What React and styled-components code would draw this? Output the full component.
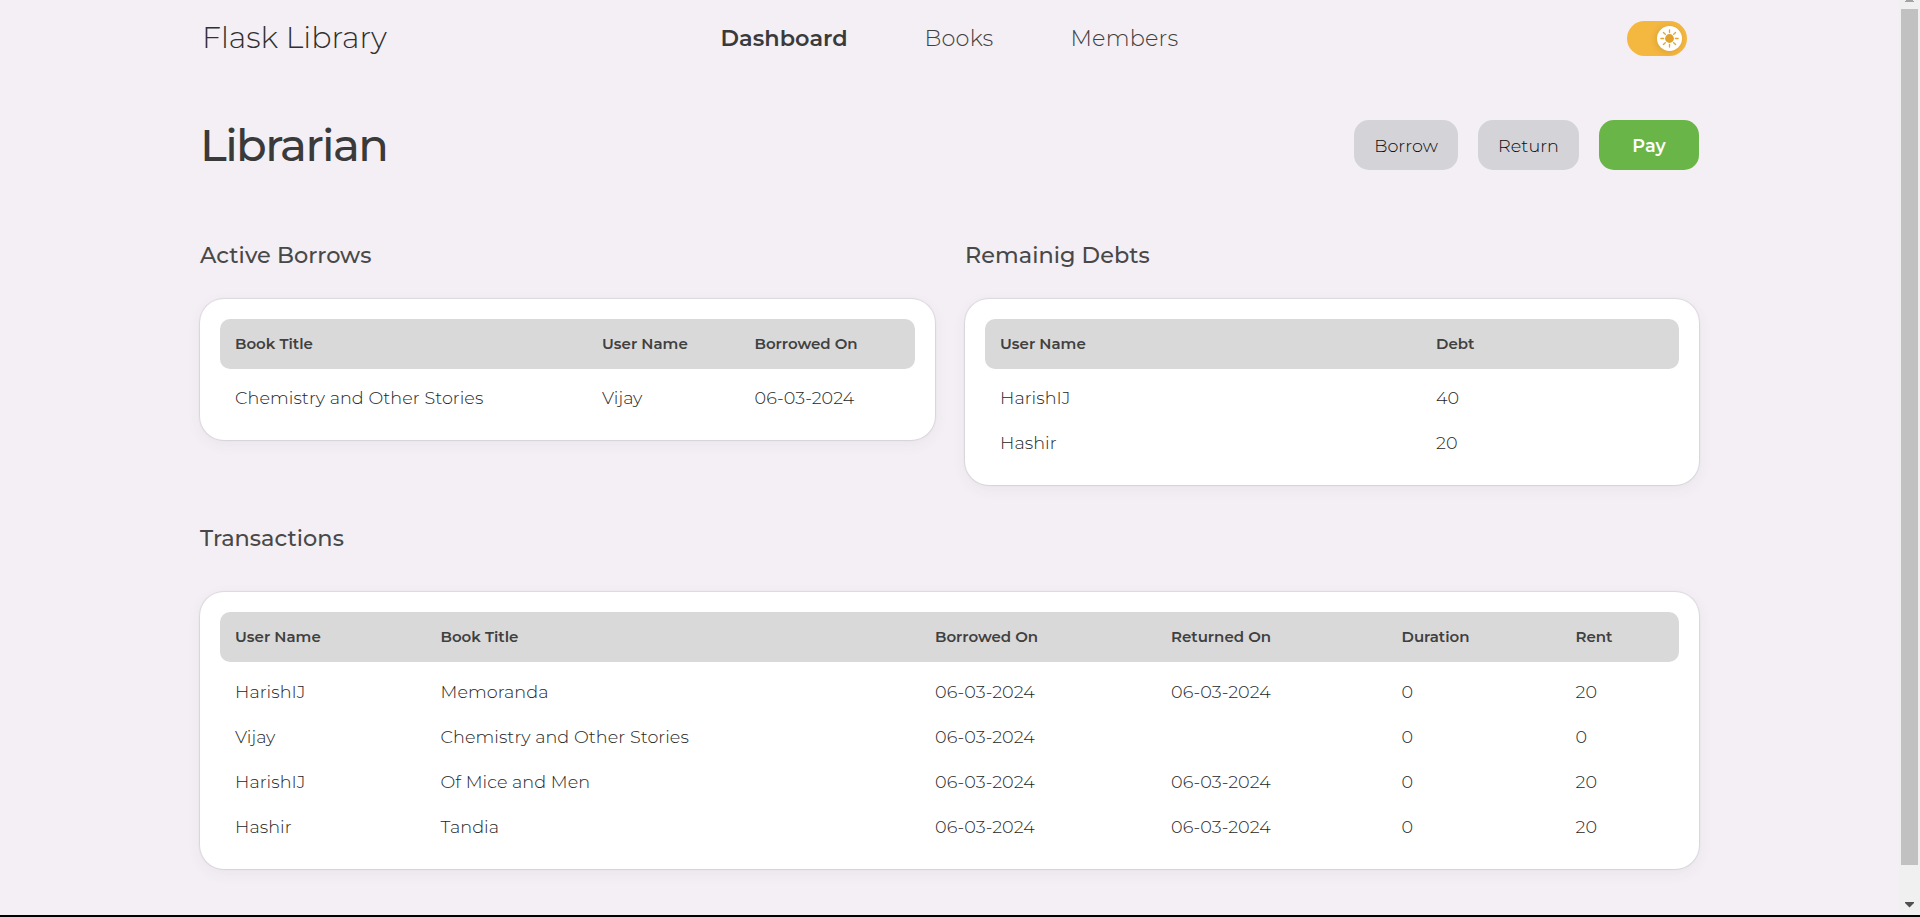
import React from "react";
import styled, { createGlobalStyle } from "styled-components";

const GlobalStyle = createGlobalStyle`
  * { box-sizing: border-box; }
  body {
    margin: 0;
    overflow: hidden;
    background: #f4eff5;
    color: #3a3a3a;
    font-family: Montserrat, Inter, "Open Sans", sans-serif;
  }
`;

const Screen = styled.div`
  display: flex;
  height: 917px;
  border-bottom: 2px solid #000;
`;

const Page = styled.div`
  flex: 1;
  display: flex;
  justify-content: center;
`;

const Content = styled.div`
  width: 1499px;
`;

const NavBar = styled.header`
  display: grid;
  grid-template-columns: 1fr auto 1fr;
  align-items: center;
  height: 77px;
  padding: 0 12px 0 2px;
`;

const Brand = styled.div`
  font-size: 30px;
  font-weight: 300;
  line-height: 40px;
  padding-bottom: 2px;
  color: #303030;
`;

const NavLinks = styled.nav`
  display: grid;
  grid-template-columns: 204px 146px 109px;
  padding: 0 0 2px 11px;
`;

const NavLink = styled.a`
  font-size: 22.4px;
  font-weight: ${(p) => (p.$active ? 600 : 300)};
  color: ${(p) => (p.$active ? "#3a3a3a" : "#404040")};
  letter-spacing: ${(p) => (p.$active ? 0.05 : 0.18)}px;
  line-height: 30px;
  white-space: nowrap;
`;

const Toggle = styled.button`
  justify-self: end;
  display: flex;
  align-items: center;
  justify-content: flex-end;
  width: 60px;
  height: 35px;
  padding: 0 5px;
  border: 0;
  border-radius: 18px;
  background: #f4b740;
`;

const Knob = styled.span`
  display: grid;
  place-items: center;
  width: 25px;
  height: 25px;
  border-radius: 50%;
  background: #fff;
  box-shadow: -1px 1px 6px rgba(120, 80, 0, 0.22);
`;

const TitleRow = styled.div`
  display: flex;
  align-items: center;
  justify-content: space-between;
  height: 50px;
  margin-top: 43px;
`;

const PageTitle = styled.h1`
  margin: 0;
  font-size: 45px;
  font-weight: 500;
  line-height: 52px;
  letter-spacing: -1.6px;
`;

const Actions = styled.div`
  display: flex;
  gap: 20px;
`;

const ActionButton = styled.button`
  width: ${(p) => p.$width}px;
  height: 50px;
  padding: 0;
  border: 0;
  border-radius: 15px;
  background: ${(p) => (p.$primary ? "#69b548" : "#d4d3d8")};
  color: ${(p) => (p.$primary ? "#fff" : "#0a0a0a")};
  font-family: inherit;
  font-size: 17.6px;
  font-weight: ${(p) => (p.$primary ? 600 : 300)};
  letter-spacing: 0.05px;
  line-height: 52px;
`;

const Columns = styled.div`
  display: grid;
  grid-template-columns: 735px 734px;
  gap: 30px;
  align-items: start;
  margin-top: 70px;
`;

const Section = styled.section`
  margin-top: ${(p) => p.$top || 0}px;
`;

const SectionTitle = styled.h2`
  margin: 0 0 ${(p) => p.$gap}px;
  font-size: 22.4px;
  font-weight: 500;
  letter-spacing: 0.04px;
  line-height: 30px;
  color: #484848;
`;

const Card = styled.div`
  padding: 20px;
  border-radius: 24px;
  background: #fff;
  box-shadow: 0 0 1px 1px rgba(40, 40, 50, 0.1), 0 4px 15px rgba(60, 40, 70, 0.06);
`;

const HeadRow = styled.div`
  display: grid;
  grid-template-columns: ${(p) => p.$cols};
  height: 50px;
  margin-bottom: ${(p) => p.$gap}px;
  padding-left: 15px;
  border-radius: 10px;
  background: #d9d9d9;
`;

const HeadCell = styled.div`
  font-size: 15px;
  font-weight: 600;
  line-height: 49px;
  color: #404040;
`;

const BodyRow = styled.div`
  display: grid;
  grid-template-columns: ${(p) => p.$cols};
  height: 45px;
  padding-left: 15px;
`;

const Cell = styled.div`
  font-size: 17.6px;
  font-weight: 300;
  letter-spacing: 0.06px;
  line-height: 46px;
  color: #262626;
`;

const Scrollbar = styled.div`
  display: flex;
  flex-direction: column;
  align-items: center;
  width: 21px;
  background: #f0f0f0;
`;

const ArrowSlot = styled.svg`
  display: block;
  flex: none;
`;

const Thumb = styled.div`
  width: 17px;
  height: 856px;
  background: #c1c1c1;
`;

function Table({ cols, head, rows, headGap = 6 }) {
  return (
    <Card>
      <HeadRow $cols={cols} $gap={headGap}>
        {head.map((h) => (
          <HeadCell key={h}>{h}</HeadCell>
        ))}
      </HeadRow>
      {rows.map((row, i) => (
        <BodyRow key={i} $cols={cols}>
          {row.map((c, j) => (
            <Cell key={j}>{c}</Cell>
          ))}
        </BodyRow>
      ))}
    </Card>
  );
}

function SunIcon() {
  return (
    <svg width="19" height="19" viewBox="-9.5 -9.5 19 19">
      <circle r="4.4" fill="#e0a22c" />
      {[0, 45, 90, 135, 180, 225, 270, 315].map((a) => (
        <line key={a} x1="0" y1="-5.9" x2="0" y2="-8.6" stroke="#e3a530" strokeWidth="1.3" strokeLinecap="round" transform={`rotate(${a})`} />
      ))}
    </svg>
  );
}

export default function App() {
  return (
    <Screen>
      <GlobalStyle />
      <Page>
        <Content>
          <NavBar>
            <Brand>Flask Library</Brand>
            <NavLinks>
              <NavLink $active>Dashboard</NavLink>
              <NavLink>Books</NavLink>
              <NavLink>Members</NavLink>
            </NavLinks>
            <Toggle aria-label="Light theme">
              <Knob><SunIcon /></Knob>
            </Toggle>
          </NavBar>

          <TitleRow>
            <PageTitle>Librarian</PageTitle>
            <Actions>
              <ActionButton $width={104}>Borrow</ActionButton>
              <ActionButton $width={101}>Return</ActionButton>
              <ActionButton $width={100} $primary>Pay</ActionButton>
            </Actions>
          </TitleRow>

          <Columns>
            <Section>
              <SectionTitle $gap={29}>Active Borrows</SectionTitle>
              <Table
                cols="367px 152.5px 1fr"
                head={["Book Title", "User Name", "Borrowed On"]}
                rows={[["Chemistry and Other Stories", "Vijay", "06-03-2024"]]}
              />
            </Section>
            <Section>
              <SectionTitle $gap={29}>Remainig Debts</SectionTitle>
              <Table
                cols="436px 1fr"
                head={["User Name", "Debt"]}
                rows={[["HarishIJ", "40"], ["Hashir", "20"]]}
              />
            </Section>
          </Columns>

          <Section $top={38}>
            <SectionTitle $gap={39}>Transactions</SectionTitle>
            <Table
              headGap={7}
              cols="205.5px 494.5px 236px 230.5px 174px 1fr"
              head={["User Name", "Book Title", "Borrowed On", "Returned On", "Duration", "Rent"]}
              rows={[
                ["HarishIJ", "Memoranda", "06-03-2024", "06-03-2024", "0", "20"],
                ["Vijay", "Chemistry and Other Stories", "06-03-2024", "", "0", "0"],
                ["HarishIJ", "Of Mice and Men", "06-03-2024", "06-03-2024", "0", "20"],
                ["Hashir", "Tandia", "06-03-2024", "06-03-2024", "0", "20"],
              ]}
            />
          </Section>
        </Content>
      </Page>
      <Scrollbar>
        <ArrowSlot width="17" height="9">
          <path d="M5 0h7v1h1v1H4V1h1z" fill="#a3a3a3" />
        </ArrowSlot>
        <Thumb />
        <ArrowSlot width="17" height="50">
          <path d="M4 37h9v1l-4.5 4.5L4 38z" fill="#505050" />
        </ArrowSlot>
      </Scrollbar>
    </Screen>
  );
}
